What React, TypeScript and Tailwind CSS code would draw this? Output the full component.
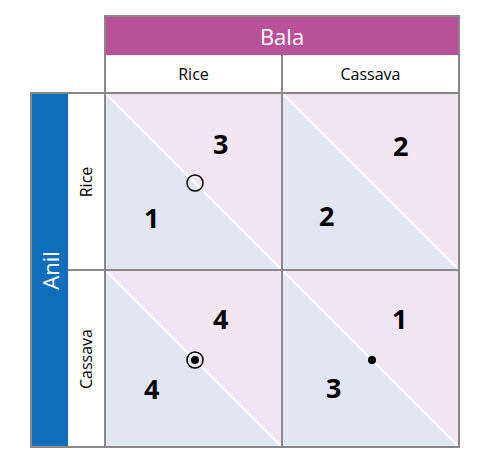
import React from "react";

type Cell = {
  top: string;
  bottom: string;
  marker?: "ring" | "target" | "dot";
  topPos: string;
  bottomPos: string;
};

const cells: Cell[] = [
  { top: "3", bottom: "1", marker: "ring", topPos: "left-[107px] top-[36px]", bottomPos: "left-[38px] top-[110px]" },
  { top: "2", bottom: "2", topPos: "left-[110px] top-[38px]", bottomPos: "left-[36px] top-[108px]" },
  { top: "4", bottom: "4", marker: "target", topPos: "left-[107px] top-[34px]", bottomPos: "left-[38px] top-[104px]" },
  { top: "1", bottom: "3", marker: "dot", topPos: "left-[109px] top-[34px]", bottomPos: "left-[43px] top-[103px]" },
];

function Marker({ kind }: { kind: Cell["marker"] }) {
  if (!kind) return null;
  return (
    <svg className="absolute left-[79px] top-[79px]" width="20" height="20" viewBox="0 0 20 20">
      {kind !== "dot" && <circle cx="10" cy="10" r="8" fill="none" stroke="#000" strokeWidth="1.5" />}
      {kind !== "ring" && <circle cx="10" cy="10" r="4" fill="#000" />}
    </svg>
  );
}

function PayoffCell({ cell }: { cell: Cell }) {
  return (
    <div className="relative h-[175px] w-[175px] bg-[linear-gradient(to_top_right,#e2e6f2_calc(50%-1px),#ffffff_calc(50%-1px),#ffffff_calc(50%+1px),#f1e6f2_calc(50%+1px))]">
      <span className={`absolute text-[27px] font-bold leading-none text-black ${cell.topPos}`}>{cell.top}</span>
      <span className={`absolute text-[27px] font-bold leading-none text-black ${cell.bottomPos}`}>{cell.bottom}</span>
      <Marker kind={cell.marker} />
    </div>
  );
}

export default function App() {
  return (
    <div className="h-[458px] w-[483px] bg-white pt-[15px] font-['Open_Sans',sans-serif]">
      <div className="ml-[104px] w-[356px] border-x-2 border-t-2 border-[#888888]">
        <div className="flex h-[38px] items-center justify-center bg-[#b9519a] text-[22px] text-white">Bala</div>
        <div className="flex h-[37px] bg-white text-[16px] text-black">
          <div className="flex w-[175px] items-center justify-center">Rice</div>
          <div className="w-[2px] bg-[#888888]" />
          <div className="flex w-[175px] items-center justify-center">Cassava</div>
        </div>
      </div>

      <div className="ml-[30px] flex">
        <div className="flex h-[356px] w-[74px] border-y-2 border-l-2 border-[#888888]">
          <div className="flex w-[36px] items-center justify-center bg-[#0f6eb9]">
            <span className="-rotate-90 whitespace-nowrap text-[22px] text-white">Anil</span>
          </div>
          <div className="flex w-[36px] flex-col bg-white text-[16px] text-black">
            <div className="flex h-[175px] items-center justify-center">
              <span className="-rotate-90 whitespace-nowrap">Rice</span>
            </div>
            <div className="h-[2px] bg-[#888888]" />
            <div className="flex h-[175px] items-center justify-center">
              <span className="-rotate-90 whitespace-nowrap">Cassava</span>
            </div>
          </div>
        </div>

        <div className="grid h-[356px] w-[356px] grid-cols-2 gap-[2px] bg-[#888888] p-[2px]">
          {cells.map((c, i) => (
            <PayoffCell key={i} cell={c} />
          ))}
        </div>
      </div>
    </div>
  );
}
